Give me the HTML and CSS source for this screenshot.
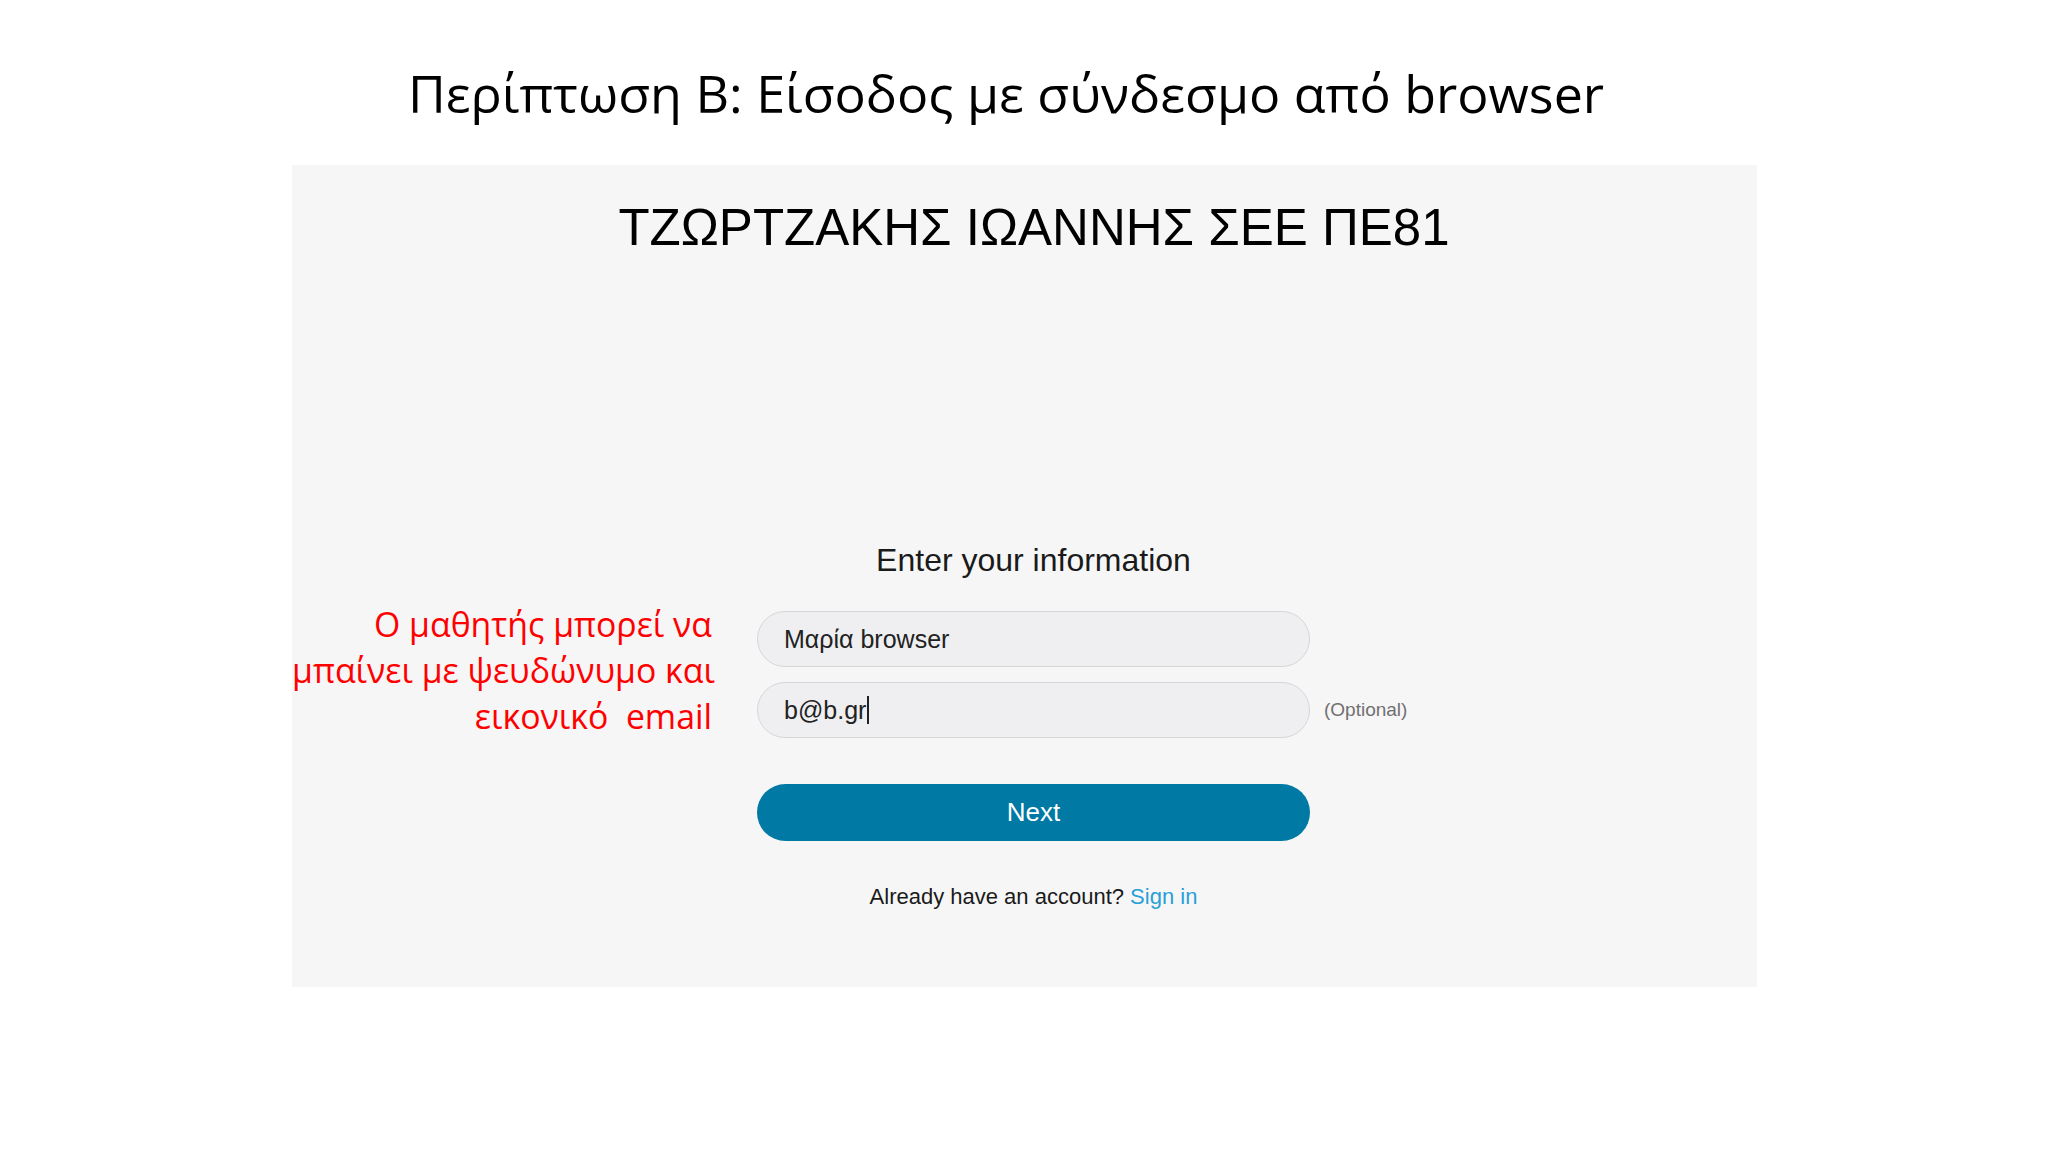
FILE: index.html
```html
<!DOCTYPE html>
<html lang="el">
<head>
    <meta charset="UTF-8">
    <meta name="viewport" content="width=device-width, initial-scale=1.0">
    <title>Περίπτωση Β</title>
    <link rel="stylesheet" href="styles.css">
</head>
<body>
    <div class="slide">
        <h1 class="slide-title">Περίπτωση Β: Είσοδος με σύνδεσμο από browser</h1>

        <div class="screenshot">
            <h2 class="org-name">ΤΖΩΡΤΖΑΚΗΣ ΙΩΑΝΝΗΣ ΣΕΕ ΠΕ81</h2>

            <div class="signin-grid">
                <div class="info-title">Enter your information</div>

                <p class="note">
                    Ο μαθητής μπορεί να<br>
                    μπαίνει με ψευδώνυμο και<br>
                    εικονικό&nbsp; email
                </p>

                <div class="field name-field">Μαρία browser</div>

                <div class="field email-field">b@b.gr<span class="caret"></span></div>
                <span class="optional">(Optional)</span>

                <button class="next-btn" type="button">Next</button>

                <div class="account-line">
                    Already have an account? <a href="#" class="sign-in">Sign in</a>
                </div>
            </div>
        </div>
    </div>
</body>
</html>
```

FILE: styles.css
```css
* {
    margin: 0;
    padding: 0;
    box-sizing: border-box;
}

body {
    background: #fff;
    font-family: 'Liberation Sans', Arial, sans-serif;
    color: #111;
}

.slide {
    width: 2048px;
    height: 1152px;
    overflow: hidden;
}

.slide-title {
    margin: 63px 36px 0 0;
    height: 102px;
    font-family: 'Open Sans', 'Noto Sans', sans-serif;
    font-weight: 400;
    font-size: 52px;
    line-height: 60px;
    text-align: center;
    color: #000;
}

.screenshot {
    margin-left: 292px;
    width: 1465px;
    height: 822px;
    background: #f6f6f7;
    padding-top: 37px;
}

.org-name {
    padding-left: 19px;
    font-weight: 400;
    font-size: 51px;
    line-height: 51px;
    text-align: center;
    color: #000;
}

.signin-grid {
    margin-top: 291px;
    display: grid;
    grid-template-columns: 465px 553px auto;
    align-items: center;
}

.info-title {
    grid-column: 2;
    grid-row: 1;
    margin-bottom: 34px;
    font-size: 32px;
    line-height: 32px;
    text-align: center;
    color: #1a1a1a;
}

.note {
    grid-column: 1;
    grid-row: 2 / span 2;
    align-self: start;
    margin-top: -9px;
    padding-right: 45px;
    white-space: nowrap;
    text-align: right;
    font-family: 'Open Sans', 'Noto Sans', sans-serif;
    font-size: 33.8px;
    line-height: 46px;
    color: #f00;
}

.field {
    grid-column: 2;
    height: 56px;
    padding-left: 26px;
    display: flex;
    align-items: center;
    background: #efeff1;
    border: 1px solid #d6d6d9;
    border-radius: 28px;
    font-size: 25px;
    color: #222;
}

.name-field {
    grid-row: 2;
    margin-bottom: 13px;
}

.email-field {
    grid-row: 3;
}

.caret {
    display: inline-block;
    width: 2px;
    height: 28px;
    margin-left: 1px;
    background: #222;
}

.optional {
    grid-column: 3;
    grid-row: 3;
    padding-left: 14px;
    font-size: 19px;
    color: #707070;
}

.next-btn {
    grid-column: 2;
    grid-row: 4;
    margin-top: 45px;
    height: 57px;
    border: none;
    border-radius: 29px;
    background: #0079a4;
    color: #fff;
    font-family: 'Liberation Sans', Arial, sans-serif;
    font-size: 26px;
}

.account-line {
    grid-column: 2;
    grid-row: 5;
    margin-top: 45px;
    font-size: 22px;
    line-height: 22px;
    text-align: center;
    color: #1a1a1a;
}

.sign-in {
    color: #2a9fd8;
    text-decoration: none;
}
```
